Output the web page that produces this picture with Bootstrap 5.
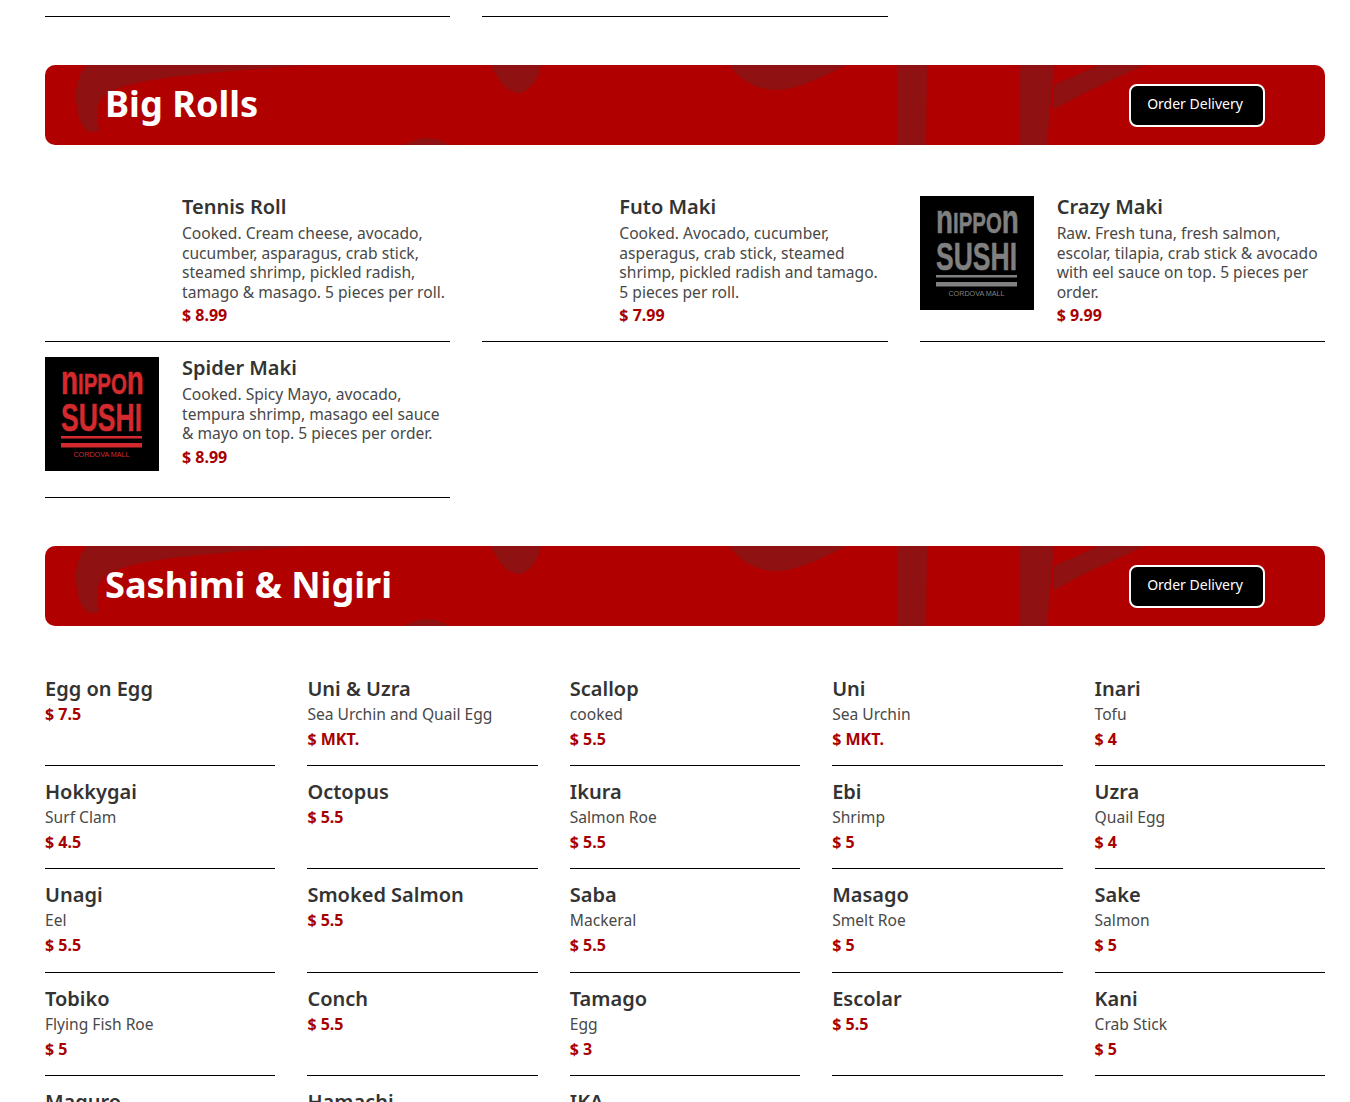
<!DOCTYPE html>
<html lang="en">
<head>
  <meta charset="UTF-8">
  <title>Nippon Sushi Menu</title>
  <link href="https://cdn.jsdelivr.net/npm/bootstrap@5.3.3/dist/css/bootstrap.min.css" rel="stylesheet">
  <style>
    html, body {
      height: 1102px;
      overflow: hidden;
    }
    body {
      font-family: "Noto Sans", "Open Sans", sans-serif;
      color: #484848;
    }
    .menu-page {
      padding: 0 25px 0 45px;
    }
    .menu-row {
      --bs-gutter-x: 32px;
      --bs-gutter-y: 0;
    }
    .top-rule {
      height: 17px;
      border-bottom: 1px solid #000;
    }
    .band {
      height: 80px;
      margin-top: 48px;
      border-radius: 10px;
      background: #b00000;
      overflow: hidden;
      padding: 0 60px;
    }
    .band-art {
      position: absolute;
      inset: 0;
      width: 100%;
      height: 100%;
    }
    .band-title {
      position: relative;
      margin: 0;
      color: #fff;
      font-size: 36.2px;
      font-weight: 700;
      line-height: 76px;
      height: 80px;
    }
    .order-btn {
      position: relative;
      width: 136px;
      height: 43px;
      padding: 0 4px 3px 0;
      background: #000;
      color: #fff;
      border: 2px solid #fff;
      border-radius: 8px;
      font-size: 14px;
    }
    .order-btn:hover { background: #000; color: #fff; }
    .roll-list { margin-top: 36px; }
    .roll-item {
      height: 100%;
      border-bottom: 1px solid #000;
      padding: 15px 0 14px;
      gap: 23px;
    }
    .roll-pic {
      flex: 0 0 114px;
      width: 114px;
      height: 114px;
      margin-bottom: 12px;
    }
    .roll-name {
      margin: 0 0 6px;
      font-size: 20px;
      line-height: 22px;
      font-weight: 600;
      color: #333;
    }
    .roll-text {
      margin: 0 0 1px;
      font-size: 15.6px;
      line-height: 19.5px;
    }
    .price-tag {
      font-size: 16px;
      font-weight: 700;
      color: #a80000;
    }
    .fish-list { margin-top: 37px; }
    .fish-item {
      height: 103.2px;
      border-bottom: 1px solid #000;
      padding-top: 13px;
    }
    .fish-name {
      margin: 0;
      font-size: 20px;
      line-height: 26px;
      font-weight: 600;
      color: #333;
    }
    .fish-text {
      font-size: 15.6px;
      line-height: 25px;
      margin: 0;
    }
    .fish-item .price-tag {
      display: block;
      line-height: 24.5px;
    }
    .logo-grey { fill: #808080; stroke: #808080; }
    .logo-red { fill: #d42a2e; stroke: #d42a2e; }
    .logo-name { font-family: "Liberation Sans", sans-serif; font-weight: 700; stroke-width: .5px; }
    .logo-place { font-family: "Liberation Sans", sans-serif; font-size: 7.2px; stroke-width: 0; }
    .logo-bar { stroke-width: 0; }
    .logo-back { fill: #000; stroke-width: 0; }
  </style>
</head>
<body>
  <svg width="0" height="0" class="d-block">
    <symbol id="bandArt" viewBox="0 0 1280 80">
      <g fill="#8f1111">
        <path d="M41 0C32 12 29 28 32 42C33 54 37 62 44 67L54 66C52 50 50 38 60 30C72 22 90 17 127 12C180 6 225 3 265 0Z"/>
        <path d="M446 0C452 14 462 28 474 28C486 26 494 12 496 0Z"/>
        <path d="M358 80C368 76 374 73 382 73C390 73 398 76 404 80Z"/>
        <path d="M684 0C695 15 712 25 730 25C745 25 762 20 802 0Z"/>
        <path d="M852 0H882L881 80H852Z"/>
        <path d="M975 0H1052C1036 9 1022 14 1009 20L1008 45C1040 26 1070 14 1100 0H1009L1002 80H975Z"/>
      </g>
    </symbol>
  </svg>

  <div class="menu-page">
    <div class="row menu-row">
      <div class="col-4"><div class="top-rule"></div></div>
      <div class="col-4"><div class="top-rule"></div></div>
    </div>

    <div class="band position-relative d-flex justify-content-between align-items-center">
      <svg class="band-art" aria-hidden="true"><use href="#bandArt"/></svg>
      <h2 class="band-title">Big Rolls</h2>
      <button class="btn order-btn" type="button">Order Delivery</button>
    </div>

    <div class="row menu-row roll-list">
      <div class="col-4">
        <div class="roll-item d-flex">
          <div class="roll-pic"></div>
          <div>
            <h3 class="roll-name">Tennis Roll</h3>
            <p class="roll-text">Cooked. Cream cheese, avocado, cucumber, asparagus, crab stick, steamed shrimp, pickled radish, tamago &amp; masago. 5 pieces per roll.</p>
            <span class="price-tag">$ 8.99</span>
          </div>
        </div>
      </div>
      <div class="col-4">
        <div class="roll-item d-flex">
          <div class="roll-pic"></div>
          <div>
            <h3 class="roll-name">Futo Maki</h3>
            <p class="roll-text">Cooked. Avocado, cucumber, asperagus, crab stick, steamed shrimp, pickled radish and tamago. 5 pieces per roll.</p>
            <span class="price-tag">$ 7.99</span>
          </div>
        </div>
      </div>
      <div class="col-4">
        <div class="roll-item d-flex">
          <svg class="roll-pic logo-grey" viewBox="0 0 114 114" role="img" aria-label="Nippon Sushi">
            <rect class="logo-back" width="114" height="114"/>
            <text class="logo-name" transform="translate(16 37) scale(.68 1)" font-size="30"><tspan font-size="41">n</tspan>IPPO<tspan font-size="41">n</tspan></text>
            <text class="logo-name" transform="translate(16 74) scale(.68 1)" font-size="39">SUSHI</text>
            <rect class="logo-bar" x="16" y="79" width="81" height="2.5"/>
            <rect class="logo-bar" x="16" y="86" width="81" height="4.5"/>
            <text class="logo-place" x="56.5" y="100" text-anchor="middle">CORDOVA MALL</text>
          </svg>
          <div>
            <h3 class="roll-name">Crazy Maki</h3>
            <p class="roll-text">Raw. Fresh tuna, fresh salmon, escolar, tilapia, crab stick &amp; avocado with eel sauce on top. 5 pieces per order.</p>
            <span class="price-tag">$ 9.99</span>
          </div>
        </div>
      </div>
      <div class="col-4">
        <div class="roll-item d-flex">
          <svg class="roll-pic logo-red" viewBox="0 0 114 114" role="img" aria-label="Nippon Sushi">
            <rect class="logo-back" width="114" height="114"/>
            <text class="logo-name" transform="translate(16 37) scale(.68 1)" font-size="30"><tspan font-size="41">n</tspan>IPPO<tspan font-size="41">n</tspan></text>
            <text class="logo-name" transform="translate(16 74) scale(.68 1)" font-size="39">SUSHI</text>
            <rect class="logo-bar" x="16" y="79" width="81" height="2.5"/>
            <rect class="logo-bar" x="16" y="86" width="81" height="4.5"/>
            <text class="logo-place" x="56.5" y="100" text-anchor="middle">CORDOVA MALL</text>
          </svg>
          <div>
            <h3 class="roll-name">Spider Maki</h3>
            <p class="roll-text">Cooked. Spicy Mayo, avocado, tempura shrimp, masago eel sauce &amp; mayo on top. 5 pieces per order.</p>
            <span class="price-tag">$ 8.99</span>
          </div>
        </div>
      </div>
    </div>

    <div class="band position-relative d-flex justify-content-between align-items-center">
      <svg class="band-art" aria-hidden="true"><use href="#bandArt"/></svg>
      <h2 class="band-title">Sashimi &amp; Nigiri</h2>
      <button class="btn order-btn" type="button">Order Delivery</button>
    </div>

    <div class="row row-cols-5 menu-row fish-list" id="fishList"></div>
  </div>

  <script>
    const fish = [
      ["Egg on Egg", "", "7.5"], ["Uni & Uzra", "Sea Urchin and Quail Egg", "MKT."], ["Scallop", "cooked", "5.5"], ["Uni", "Sea Urchin", "MKT."], ["Inari", "Tofu", "4"],
      ["Hokkygai", "Surf Clam", "4.5"], ["Octopus", "", "5.5"], ["Ikura", "Salmon Roe", "5.5"], ["Ebi", "Shrimp", "5"], ["Uzra", "Quail Egg", "4"],
      ["Unagi", "Eel", "5.5"], ["Smoked Salmon", "", "5.5"], ["Saba", "Mackeral", "5.5"], ["Masago", "Smelt Roe", "5"], ["Sake", "Salmon", "5"],
      ["Tobiko", "Flying Fish Roe", "5"], ["Conch", "", "5.5"], ["Tamago", "Egg", "3"], ["Escolar", "", "5.5"], ["Kani", "Crab Stick", "5"],
      ["Maguro"], ["Hamachi"], ["IKA"]
    ];

    const list = document.getElementById("fishList");
    fish.forEach(f => {
      const col = document.createElement("div");
      col.className = "col";
      col.innerHTML = `
        <div class="fish-item">
          <h3 class="fish-name"></h3>
          ${f[1] ? `<p class="fish-text">${f[1]}</p>` : ""}
          ${f[2] ? `<span class="price-tag">$ ${f[2]}</span>` : ""}
        </div>`;
      col.querySelector(".fish-name").textContent = f[0];
      list.appendChild(col);
    });
  </script>
  <script src="https://cdn.jsdelivr.net/npm/bootstrap@5.3.3/dist/js/bootstrap.bundle.min.js"></script>
</body>
</html>
